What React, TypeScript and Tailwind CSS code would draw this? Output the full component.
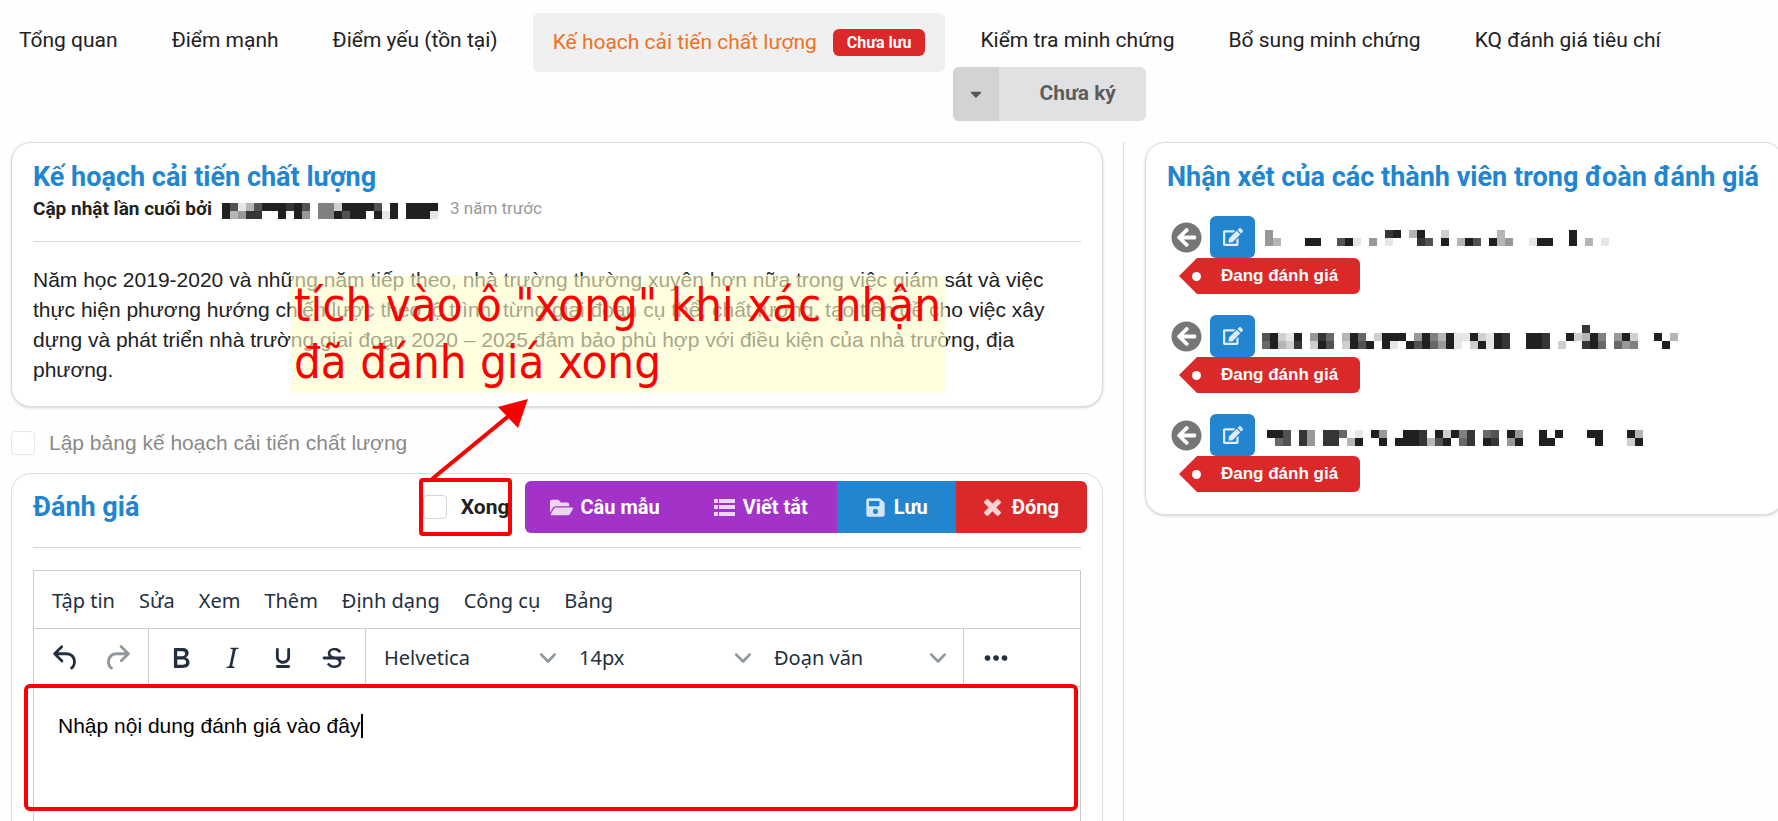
import type { ReactNode } from 'react';
import { useState } from 'react';
import { FaArrowCircleLeft, FaCaretDown, FaEdit, FaFolderOpen, FaSave } from 'react-icons/fa';

const ICONS = {
    undo: 'M6.4 8H12c3.7 0 6.2 2 6.8 5.1.6 2.7-.4 5.6-2.3 6.8a1 1 0 0 1-1-1.8c1.1-.6 1.8-2.7 1.4-4.6-.5-2.1-2.1-3.5-4.9-3.5H6.4l3.3 3.3a1 1 0 1 1-1.4 1.4l-5-5a1 1 0 0 1 0-1.4l5-5a1 1 0 0 1 1.4 1.4L6.4 8Z',
    redo: 'M17.6 10H12c-2.8 0-4.4 1.4-4.9 3.5-.4 2 .3 4 1.4 4.6a1 1 0 1 1-1 1.8c-2-1.2-2.9-4.1-2.3-6.8.6-3 3-5.1 6.8-5.1h5.6l-3.3-3.3a1 1 0 1 1 1.4-1.4l5 5a1 1 0 0 1 0 1.4l-5 5a1 1 0 0 1-1.4-1.4l3.3-3.3Z',
    bold: 'M7.8 19c-.3 0-.5 0-.6-.2l-.2-.5V5.7c0-.2 0-.4.2-.5l.6-.2h5c1.5 0 2.7.3 3.5 1 .7.6 1.1 1.4 1.1 2.5a3 3 0 0 1-.6 1.9c-.4.6-1 1-1.6 1.2.4.1.9.3 1.3.6s.8.7 1 1.2c.4.4.5 1 .5 1.6 0 1.3-.4 2.3-1.3 3-.8.7-2.1 1-3.8 1H7.8Zm5-8.3c.6 0 1.2-.1 1.6-.5.4-.3.6-.7.6-1.3 0-1.1-.8-1.7-2.3-1.7H9.3v3.5h3.4Zm.5 6c.7 0 1.3-.1 1.7-.4.4-.4.6-.9.6-1.5s-.2-1-.7-1.4c-.4-.3-1-.4-2-.4H9.4v3.8h4Z',
    italic: 'm16.7 4.7-.1.9h-.3c-.6 0-1 0-1.4.3-.3.3-.4.6-.5 1.1l-2.1 9.8v.6c0 .5.4.8 1.4.8h.2l-.2.8H8l.2-.8h.2c1.1 0 1.8-.5 2-1.5l2-9.8.1-.5c0-.6-.4-.8-1.4-.8h-.3l.2-.9h5.8Z',
    underline: 'M16 5c.6 0 1 .4 1 1v5.5a4 4 0 0 1-.4 1.8l-1 1.4a5.3 5.3 0 0 1-5.5 1 5 5 0 0 1-1.6-1c-.5-.4-.8-.9-1.1-1.4a4 4 0 0 1-.4-1.8V6c0-.6.4-1 1-1s1 .4 1 1v5.5c0 .3 0 .6.2 1l.6.7a3.3 3.3 0 0 0 2.2.8 3.4 3.4 0 0 0 2.2-.8c.3-.2.4-.5.6-.8l.2-.9V6c0-.6.4-1 1-1ZM8 17h8c.6 0 1 .4 1 1s-.4 1-1 1H8a1 1 0 0 1 0-2Z',
    strike: 'M15.6 8.5c-.5-.7-1-1.1-1.3-1.3-.6-.4-1.3-.6-2-.6-2.7 0-2.8 1.7-2.8 2.1 0 1.6 1.8 2 3.2 2.3 4.4.9 4.6 2.8 4.6 3.9 0 1.4-.7 4.1-5 4.1A6.2 6.2 0 0 1 7 16.4l1.5-1.1c.4.6 1.6 2 3.7 2 1.6 0 2.5-.4 3-1.2.4-.8.3-2-.8-2.6-.7-.4-1.6-.7-2.9-1-1-.2-3.9-.8-3.9-3.6C7.6 6 10.3 5 12.4 5c2.9 0 4.2 1.6 4.7 2.4l-1.5 1.1ZM5 11h14a1 1 0 0 1 0 2H5a1 1 0 0 1 0-2Z',
    more: 'M6 10a2 2 0 0 0-2 2c0 1.1.9 2 2 2a2 2 0 0 0 2-2 2 2 0 0 0-2-2Zm12 0a2 2 0 0 0-2 2c0 1.1.9 2 2 2a2 2 0 0 0 2-2 2 2 0 0 0-2-2Zm-6 0a2 2 0 0 0-2 2c0 1.1.9 2 2 2a2 2 0 0 0 2-2 2 2 0 0 0-2-2Z',
};

// Hidden names are drawn as 8px blocks: a dot is empty, 1 is lightest, 9 is darkest.
const SHADES = ['#ffffff', '#e6e6e6', '#cfcfcf', '#b5b5b5', '#989898', '#808080', '#686868', '#525252', '#363636', '#202020'];

const AUTHOR = [
    '97137999897.55299997.9.9999',
    '93488..9.94.559799.919.9991',
];

const MEMBERS = [
    {
        id: 1,
        lead: 'pt-0.5 pl-[10px]',
        rows: [
            '',
            '4..............89.39..2......3........9',
            '43...99..791.4.1...87.9.397.934..199..9.3.1',
            '',
        ],
    },
    {
        id: 2,
        lead: 'pt-[10px] pl-[7px]',
        rows: [
            '........................................8',
            '79219.486.396.2999.495391192198..998..92395.492..9.3',
            '69328.297.2979.91.9796491.29198..998.2..896.645...9',
            '',
        ],
    },
    {
        id: 3,
        lead: 'pt-1.5 pl-[12px]',
        rows: [
            '',
            '997.84.886.1.94..998.92958.67.94..9.9...99...93',
            '.67.84.88.39..9.9998379.68.98.49..99.....9...29',
            '',
        ],
    },
];

function Mosaic({ rows }: { rows: string[] }) {
    const cols = Math.max(...rows.map((r) => r.length));
    return (
        <svg width={cols * 8} height={rows.length * 8} shapeRendering="crispEdges" aria-hidden="true" className="shrink-0">
            {rows.map((row, y) =>
                row.split('').map((c, x) =>
                    c === '.' ? null : <rect key={`${x}-${y}`} x={x * 8} y={y * 8} width="8" height="8" fill={SHADES[Number(c)]} />
                )
            )}
        </svg>
    );
}

function ListIcon() {
    return (
        <svg width="21" height="17" fill="currentColor" aria-hidden="true">
            <path d="M0 0h4v4H0zM5 0h16v4H5zM0 6h4v4H0zM5 6h16v4H5zM0 13h4v4H0zM5 13h16v4H5z" />
        </svg>
    );
}

function CrossIcon() {
    return (
        <svg width="17" height="17" viewBox="110 366 1188 1192" fill="currentColor" aria-hidden="true">
            <path d="M1298 1322q0 40-28 68l-136 136q-28 28-68 28t-68-28l-294-294-294 294q-28 28-68 28t-68-28l-136-136q-28-28-28-68t28-68l294-294-294-294q-28-28-28-68t28-68l136-136q28-28 68-28t68 28l294 294 294-294q28-28 68-28t68 28l136 136q28 28 28 68t-28 68l-294 294 294 294q28 28 28 68z" />
        </svg>
    );
}

function Tab({ children }: { children: ReactNode }) {
    return <a href="#" className="px-[27px] pt-[26px] leading-7 whitespace-nowrap">{children}</a>;
}

function Check({ checked, onChange, tone }: { checked: boolean; onChange: (v: boolean) => void; tone: string }) {
    return (
        <input type="checkbox" checked={checked} onChange={(e) => onChange(e.target.checked)}
            className={`size-6 shrink-0 appearance-none rounded border bg-white checked:bg-[#2185d0] ${tone}`} />
    );
}

function ToolButton({ icon, label, faded }: { icon: keyof typeof ICONS; label: string; faded?: boolean }) {
    return (
        <button aria-label={label} className={`flex h-12 w-[51px] items-center justify-center ${faded ? 'opacity-50' : ''}`}>
            <svg width="34" height="34" viewBox="0 0 24 24" fill="#222f3e"><path d={ICONS[icon]} /></svg>
        </button>
    );
}

function ToolSelect({ label, value }: { label: string; value: string }) {
    return (
        <div className="relative w-[195px]">
            <select aria-label={label} className="h-12 w-full appearance-none bg-transparent pl-3 text-xl">
                <option>{value}</option>
            </select>
            <svg width="16" height="16" viewBox="0 0 10 10" className="pointer-events-none absolute top-4 right-[11px] fill-[#222f3e]/50">
                <path d="M8.7 2.2c.3-.3.8-.3 1 0 .4.4.4.9 0 1.2L5.7 7.8c-.3.3-.9.3-1.2 0L.2 3.4a.8.8 0 0 1 0-1.2c.3-.3.8-.3 1.1 0L5 6l3.7-3.8Z" />
            </svg>
        </div>
    );
}

function ActionButton({ icon, color, children }: { icon: ReactNode; color: string; children: ReactNode }) {
    return (
        <button className={`flex h-[52px] items-center text-xl font-bold text-white ${color}`}>
            <span className="opacity-80">{icon}</span>
            {children}
        </button>
    );
}

export default function App() {
    const [plan, setPlan] = useState(false);
    const [done, setDone] = useState(false);
    const [text, setText] = useState('Nhập nội dung đánh giá vào đây');

    return (
        <div className="h-screen overflow-hidden bg-[#fefefe] font-[Roboto,sans-serif] text-[21px] text-[#212121]">
            <header className="flex h-[142px] items-start">
                <nav className="-ml-2 flex items-start">
                    <Tab>Tổng quan</Tab>
                    <Tab>Điểm mạnh</Tab>
                    <Tab>Điểm yếu (tồn tại)</Tab>
                    <a href="#" className="mx-2 mt-[13px] flex h-[59px] items-center gap-4 rounded-md bg-[#f0f0f0] px-5 whitespace-nowrap text-[#f2711c]">
                        Kế hoạch cải tiến chất lượng
                        <span className="rounded-md bg-[#db2828] px-3.5 text-base leading-[27px] font-bold text-white">Chưa lưu</span>
                    </a>
                </nav>
                <div>
                    <nav className="flex h-[67px]">
                        <Tab>Kiểm tra minh chứng</Tab>
                        <Tab>Bổ sung minh chứng</Tab>
                        <Tab>KQ đánh giá tiêu chí</Tab>
                    </nav>
                    <button className="flex h-[54px] items-center overflow-hidden rounded-md bg-[#e0e1e2] font-bold text-black/60">
                        <span className="flex h-full w-[46px] items-center justify-center bg-[#d2d3d4]"><FaCaretDown size={18} /></span>
                        <span className="pr-[30px] pl-10">Chưa ký</span>
                    </button>
                </div>
            </header>

            <div className="grid grid-cols-[minmax(0,1123fr)_minmax(0,655fr)]">
                <main className="pr-5 pl-[11px]">
                    <section className="relative rounded-[20px] border border-[#dcdddd] bg-white px-[21px] pt-4 pb-[21px] shadow-[0_1px_3px_#d4d4d5]">
                        <h2 className="text-[27px] leading-9 font-bold text-[#2185d0]">Kế hoạch cải tiến chất lượng</h2>
                        <div className="flex h-7 items-center">
                            <span className="text-[19px] font-bold">Cập nhật lần cuối bởi</span>
                            <span className="pt-1 pr-3 pl-2.5"><Mosaic rows={AUTHOR} /></span>
                            <span className="text-[17px] text-[#999999]">3 năm trước</span>
                        </div>
                        <hr className="mt-[18px] mb-[23px] border-[#d9d9da]" />
                        <p className="font-['Liberation_Sans',sans-serif] leading-[30px]">
                            Năm học 2019-2020 và những năm tiếp theo, nhà trường thường xuyên hơn nữa trong việc giám sát và việc thực hiện phương hướng chiến lược theo lộ trình, từng giai đoạn cụ thể, chất lượng, tạo tiền đề cho việc xây dựng và phát triển nhà trường giai đoạn 2020 – 2025 đảm bảo phù hợp với điều kiện của nhà trường, địa phương.
                        </p>
                        <div className="absolute top-[133px] left-[279px] h-[117px] w-[655px] bg-[#ffffcb]/60 pl-[3px] font-['DejaVu_Sans_Condensed','DejaVu_Sans',sans-serif] text-[47px] leading-[57px] whitespace-nowrap text-[#ff0000]">
                            tích vào ô "xong" khi xác nhận<br />đã đánh giá xong
                        </div>
                    </section>

                    <label className="flex h-[66px] items-center gap-[14px] pt-1.5 font-['Liberation_Sans',sans-serif] text-[#8a8a8a]">
                        <Check checked={plan} onChange={setPlan} tone="border-[#e6e6e6]" />
                        Lập bảng kế hoạch cải tiến chất lượng
                    </label>

                    <section className="rounded-t-[20px] border border-[#dcdddd] bg-white px-[21px] pt-[7px]">
                        <div className="flex items-center">
                            <h2 className="flex-1 text-[27px] leading-9 font-bold text-[#2185d0]">Đánh giá</h2>
                            <div className="relative mr-[15px]">
                                <label className="flex items-center gap-[14px] leading-7 font-bold">
                                    <Check checked={done} onChange={setDone} tone="border-[#d4d4d5]" />
                                    Xong
                                </label>
                                <div className="pointer-events-none absolute -inset-y-[15px] -right-0.5 -left-1 rounded-sm border-4 border-[#fa0000]" />
                                <svg width="110" height="82" className="pointer-events-none absolute bottom-[41px] left-1" aria-hidden="true">
                                    <path d="M5 81 84 16" stroke="#fa0000" strokeWidth="4" />
                                    <path d="M101 1 71 9l20 21Z" fill="#fa0000" />
                                </svg>
                            </div>
                            <div className="-mr-1.5 flex overflow-hidden rounded-md">
                                <ActionButton color="gap-2 bg-[#a333c8] px-[25px]" icon={<FaFolderOpen size={23} />}>Câu mẫu</ActionButton>
                                <ActionButton color="gap-2 bg-[#a333c8] px-[29px]" icon={<ListIcon />}>Viết tắt</ActionButton>
                                <ActionButton color="gap-2 bg-[#2185d0] px-7" icon={<FaSave size={21} />}>Lưu</ActionButton>
                                <ActionButton color="gap-[11px] bg-[#db2828] px-7" icon={<CrossIcon />}>Đóng</ActionButton>
                            </div>
                        </div>
                        <hr className="mt-[14px] mb-[22px] border-[#d9d9da]" />

                        <div className="border border-[#cccccc] font-['Noto_Sans',sans-serif] text-[#222f3e]">
                            <div className="flex h-[58px] items-center gap-6 border-b border-[#cccccc] px-[18px] pt-0.5 text-xl">
                                {['Tập tin', 'Sửa', 'Xem', 'Thêm', 'Định dạng', 'Công cụ', 'Bảng'].map((item) => (
                                    <button key={item} className="whitespace-nowrap">{item}</button>
                                ))}
                            </div>
                            <div className="flex h-[58px] border-b border-[#cccccc]">
                                <div className="flex items-center border-r border-[#cccccc] px-1.5">
                                    <ToolButton icon="undo" label="Hoàn tác" />
                                    <ToolButton icon="redo" label="Làm lại" faded />
                                </div>
                                <div className="flex items-center border-r border-[#cccccc] px-1.5">
                                    <ToolButton icon="bold" label="In đậm" />
                                    <ToolButton icon="italic" label="In nghiêng" />
                                    <ToolButton icon="underline" label="Gạch dưới" />
                                    <ToolButton icon="strike" label="Gạch ngang" />
                                </div>
                                <div className="flex items-center border-r border-[#cccccc] px-1.5">
                                    <ToolSelect label="Phông chữ" value="Helvetica" />
                                    <ToolSelect label="Cỡ chữ" value="14px" />
                                    <ToolSelect label="Định dạng" value="Đoạn văn" />
                                </div>
                                <div className="flex items-center px-1.5">
                                    <ToolButton icon="more" label="Thêm" />
                                </div>
                            </div>
                            <div className="relative">
                                <textarea aria-label="Nội dung đánh giá" value={text} onChange={(e) => setText(e.target.value)}
                                    className="block h-[200px] w-full resize-none px-6 py-[25px] font-['Liberation_Sans',sans-serif] text-[21px] leading-7 text-black outline-none" />
                                <span className="absolute top-[27px] left-[327px] h-6 w-0.5 bg-black" />
                                <div className="pointer-events-none absolute -top-[3px] right-[2px] -left-[10px] h-[127px] rounded-md border-4 border-[#fa0000]" />
                            </div>
                        </div>
                    </section>
                </main>

                <aside className="-mr-1.5 border-l border-[#dcdddd] pl-[21px]">
                    <section className="rounded-[20px] border border-[#dcdddd] bg-white px-[21px] pt-4 pb-px shadow-[0_1px_3px_#d4d4d5]">
                        <h2 className="mb-[21px] text-[27px] leading-9 font-bold whitespace-nowrap text-[#2185d0]">Nhận xét của các thành viên trong đoàn đánh giá</h2>
                        {MEMBERS.map((m) => (
                            <div key={m.id} className="h-[99px] pl-1">
                                <div className="flex h-[42px] items-center">
                                    <FaArrowCircleLeft size={31} className="text-[#767676]" />
                                    <button aria-label="Sửa nhận xét" className="ml-2 flex h-[42px] w-[45px] items-center justify-center rounded-md bg-[#2185d0] text-white/85">
                                        <FaEdit size={20} />
                                    </button>
                                    <span className={m.lead}><Mosaic rows={m.rows} /></span>
                                </div>
                                <div className="ml-2 flex">
                                    <svg width="18" height="36" aria-hidden="true"><path d="M18 0v36L0 18Z" fill="#db2828" /></svg>
                                    <span className="relative rounded-r-md bg-[#db2828] pr-[22px] pl-6 font-['Liberation_Sans',sans-serif] text-[17px] leading-9 font-bold text-white">
                                        <span className="absolute top-[14px] -left-[5px] size-[9px] rounded-full bg-white" />
                                        Đang đánh giá
                                    </span>
                                </div>
                            </div>
                        ))}
                    </section>
                </aside>
            </div>
        </div>
    );
}
